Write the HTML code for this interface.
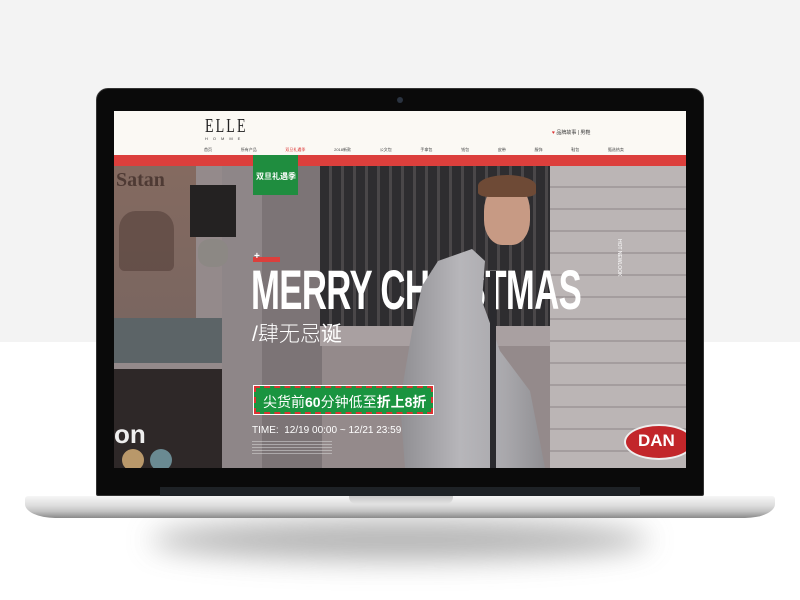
<!DOCTYPE html>
<html><head><meta charset="utf-8"><style>
*{margin:0;padding:0;box-sizing:border-box}
body{width:800px;height:600px;overflow:hidden;background:#fff;position:relative;font-family:"Liberation Sans","Noto Sans CJK SC",sans-serif}
.a{position:absolute}
</style></head><body>
<div class="a" style="left:0;top:0;width:800px;height:342px;background:#f3f3f3"></div>
<div class="a" style="left:150px;top:520px;width:500px;height:40px;border-radius:50%;background:#9a9a9a;filter:blur(14px);opacity:.75"></div>
<div class="a" style="left:25px;top:496px;width:750px;height:22px;border-radius:3px 3px 30px 30px/3px 3px 14px 14px;background:linear-gradient(#f6f6f6,#dcdcdc 45%,#c2c2c2 70%,#8a8a8a 100%)"></div>
<div class="a" style="left:349px;top:496px;width:104px;height:8px;border-radius:0 0 7px 7px;background:linear-gradient(#c8c8c8,#e2e2e2)"></div>
<div class="a" style="left:96px;top:88px;width:608px;height:408px;border-radius:12px 12px 2px 2px;background:#0a0a0a;border:1px solid #333"></div>
<div class="a" style="left:160px;top:487px;width:480px;height:9px;background:#1e2226"></div>
<div class="a" style="left:397px;top:97px;width:6px;height:6px;border-radius:50%;background:#2a3340"></div>
<div class="a" style="left:114px;top:111px;width:572px;height:357px;overflow:hidden;background:#9a8f90">
 <div class="a" style="left:0;top:0;width:572px;height:44px;background:#fbf9f4"></div>
 <div class="a" style="left:91px;top:4px;font-family:'Liberation Serif',serif;font-size:20px;letter-spacing:3px;color:#222;transform:scaleX(.7);transform-origin:left">ELLE</div>
 <div class="a" style="left:91px;top:25px;font-size:4px;letter-spacing:5px;color:#444">HOMME</div>
 <div class="a" style="left:438px;top:18px;font-size:5px;color:#333"><span style="color:#d33">♥</span> 品牌故事 | 男鞋</div>
 <div class="a" style="left:90px;top:36px;font-size:4px;color:#444;display:flex;width:420px;justify-content:space-between"><span>首页</span><span>所有产品</span><span style="color:#d33">双旦礼遇季</span><span>2018新款</span><span>公文包</span><span>手拿包</span><span>钱包</span><span>皮带</span><span>服饰</span><span>鞋包</span><span>甄选热卖</span></div>
 <div class="a" style="left:0;top:55px;width:572px;height:302px;background:#948a8b"></div>
 <div class="a" style="left:0;top:55px;width:82px;height:152px;background:linear-gradient(#846a60,#7a6660)"></div>
 <div class="a" style="left:2px;top:58px;font-family:'Liberation Serif',serif;font-weight:bold;font-size:20px;color:#4e3a34">Satan</div>
 <div class="a" style="left:5px;top:100px;width:55px;height:60px;background:#5b4640;opacity:.7;border-radius:30% 30% 10% 10%"></div>
 <div class="a" style="left:0;top:207px;width:110px;height:45px;background:#5c6467"></div>
 <div class="a" style="left:0;top:258px;width:110px;height:99px;background:#2e2828"></div>
 <div class="a" style="left:0;top:308px;font-size:26px;font-weight:bold;color:#eee">on</div>
 <div class="a" style="left:8px;top:338px;width:22px;height:22px;border-radius:50%;background:#b9986a"></div>
 <div class="a" style="left:36px;top:338px;width:22px;height:22px;border-radius:50%;background:#6a8a92"></div>
 <div class="a" style="left:108px;top:55px;width:40px;height:302px;background:#8e8688"></div>
 <div class="a" style="left:76px;top:74px;width:46px;height:52px;background:#242222"></div>
 <div class="a" style="left:84px;top:128px;width:30px;height:28px;border-radius:40%;background:#8c8884"></div>
 <div class="a" style="left:148px;top:55px;width:60px;height:302px;background:#7c7476"></div>
 <div class="a" style="left:206px;top:55px;width:240px;height:165px;background:repeating-linear-gradient(90deg,#2e2d30 0 9px,#4a4749 9px 12px)"></div>
 <div class="a" style="left:206px;top:215px;width:240px;height:20px;background:#a9a0a1"></div>
 <div class="a" style="left:436px;top:55px;width:136px;height:302px;background:repeating-linear-gradient(#bbb5b5 0 20px,#a49d9e 20px 22px)"></div>
 <div class="a" style="left:510px;top:313px;width:70px;height:36px;border-radius:50%;background:#c2262a;border:2px solid #eee"></div>
 <div class="a" style="left:524px;top:320px;font-size:17px;font-weight:bold;color:#fff">DAN</div>
 <div class="a" style="left:0;top:44px;width:572px;height:11px;background:#dc3f3c"></div>
 <div class="a" style="left:139px;top:44px;width:45px;height:40px;background:#1f8d3f"></div>
 <div class="a" style="left:142px;top:60px;font-size:8px;color:#fff;font-weight:bold">双旦礼遇季</div>
 <div class="a" style="left:139px;top:146px;width:27px;height:5px;background:#dc3f3c"></div>
 <div class="a" style="left:140px;top:140px;font-size:10px;color:#fff;font-weight:bold">+</div>
 <div class="a" style="left:137px;top:146px;font-family:'Liberation Sans Narrow','Liberation Sans',sans-serif;font-weight:bold;font-size:56px;color:#fff;transform:scaleX(.62);transform-origin:left;white-space:nowrap;letter-spacing:-1px">MERRY CHRISTMAS</div>
 <!-- person over text -->
 <div class="a" style="left:286px;top:130px;width:150px;height:227px;background:linear-gradient(90deg,#8f8e92,#b7b6ba 40%,#a9a8ac 70%,#8d8c90);clip-path:polygon(38px 20px,72px 8px,85px 20px,82px 60px,100px 110px,130px 150px,145px 227px,5px 227px,0 160px,12px 90px,22px 45px)"></div>
 <div class="a" style="left:370px;top:72px;width:46px;height:62px;border-radius:45% 45% 40% 40%;background:#c79a84"></div>
 <div class="a" style="left:364px;top:64px;width:58px;height:22px;border-radius:50% 50% 20% 20%;background:#6e4a36"></div>
 <div class="a" style="left:376px;top:160px;width:6px;height:197px;background:#2a2a2e"></div>
 <div class="a" style="left:138px;top:207px;font-size:21px;color:#fff;font-weight:300">/肆无忌<b>诞</b></div>
 <div class="a" style="left:140px;top:275px;width:179px;height:28px;background:#1a9440;border:2px dashed #d33;outline:1px solid #fff"></div>
 <div class="a" style="left:149px;top:281px;font-size:14px;color:#fff;white-space:nowrap">尖货前<b>60</b>分钟低至<b>折上8折</b></div>
 <div class="a" style="left:138px;top:314px;font-size:10px;color:#fff;white-space:nowrap">TIME:&nbsp; 12/19 00:00 ~ 12/21 23:59</div>
 <div class="a" style="left:138px;top:330px;width:80px;height:14px;background:repeating-linear-gradient(#ddd 0 1px,transparent 1px 3px);opacity:.5"></div>
 <div class="a" style="left:508px;top:128px;font-size:5px;color:#fff;transform:rotate(90deg);transform-origin:left top;white-space:nowrap">HOT NEWLOOK</div>
</div>
</body></html>
